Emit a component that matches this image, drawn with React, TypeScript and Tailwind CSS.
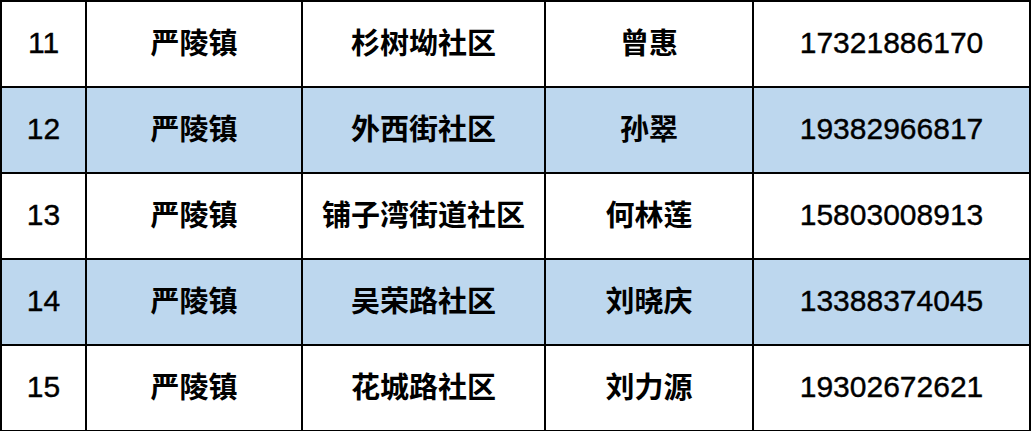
const rows = [
  { no: '11', town: '严陵镇', community: '杉树坳社区', name: '曾惠', phone: '17321886170' },
  { no: '12', town: '严陵镇', community: '外西街社区', name: '孙翠', phone: '19382966817' },
  { no: '13', town: '严陵镇', community: '铺子湾街道社区', name: '何林莲', phone: '15803008913' },
  { no: '14', town: '严陵镇', community: '吴荣路社区', name: '刘晓庆', phone: '13388374045' },
  { no: '15', town: '严陵镇', community: '花城路社区', name: '刘力源', phone: '19302672621' },
]

const cjk = "font-['Liberation_Sans','Noto_Sans_CJK_SC',sans-serif] font-bold text-[29px] pt-0.5"
const num = "font-['Liberation_Sans',sans-serif] text-[30px] [-webkit-text-stroke:0.4px_black] pb-1"

export default function App() {
  return (
    <div className="w-[1031px] h-[431px] bg-white overflow-hidden">
      <table className="w-[1031px] border-collapse table-fixed text-black">
        <colgroup>
          <col className="w-[85px]" />
          <col className="w-[216px]" />
          <col className="w-[243px]" />
          <col className="w-[208px]" />
          <col />
        </colgroup>
        <tbody>
          {rows.map((r, i) => (
            <tr key={r.no} className={`h-[86px] ${i % 2 === 1 ? 'bg-[#bdd7ee]' : 'bg-white'}`}>
              <td className={`border-2 border-black text-center px-0 ${num}`}>{r.no}</td>
              <td className={`border-2 border-black text-center px-0 ${cjk}`}>{r.town}</td>
              <td className={`border-2 border-black text-center px-0 ${cjk}`}>{r.community}</td>
              <td className={`border-2 border-black text-center px-0 ${cjk}`}>{r.name}</td>
              <td className={`border-2 border-black text-center px-0 ${num}`}>{r.phone}</td>
            </tr>
          ))}
        </tbody>
      </table>
    </div>
  )
}
